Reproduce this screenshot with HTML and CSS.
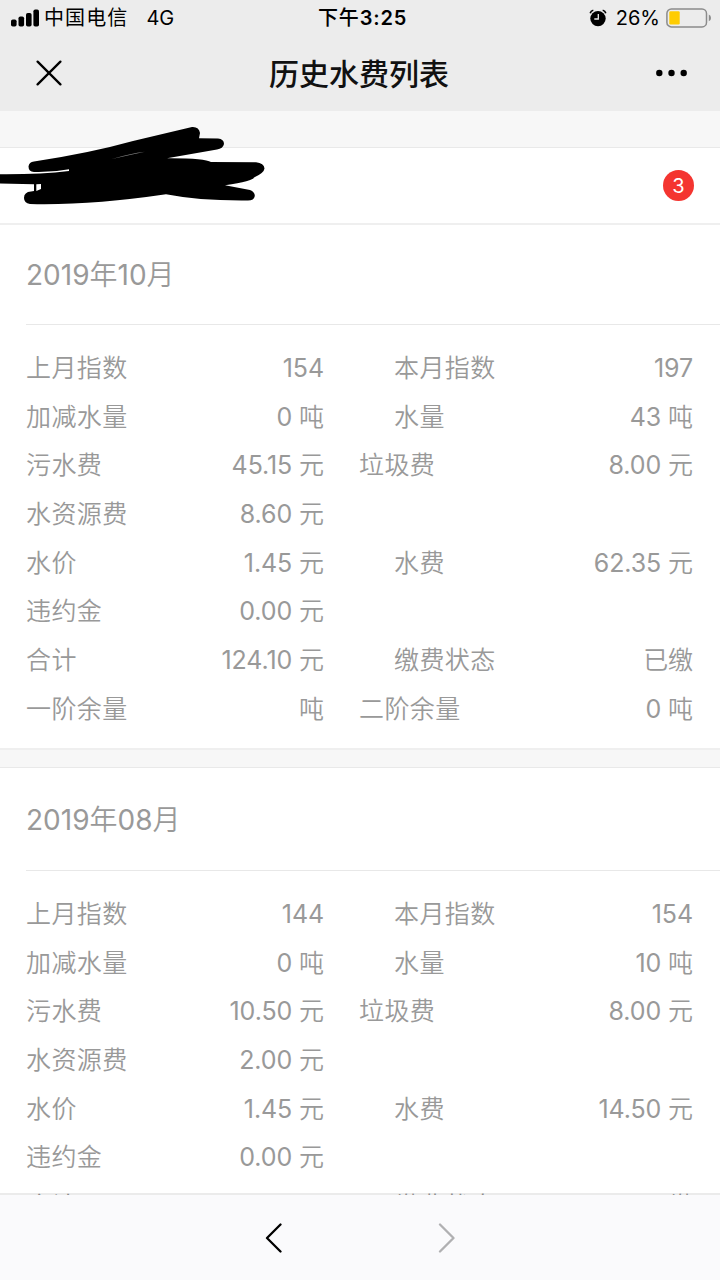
FILE: index.html
```html
<!DOCTYPE html>
<html lang="zh-CN">
<head>
    <meta charset="UTF-8">
    <meta name="viewport" content="width=device-width, initial-scale=1.0">
    <title>历史水费列表</title>
    <link rel="stylesheet" href="styles.css">
</head>
<body>

    <!-- Status bar and title -->
    <header class="header">
        <div class="status-bar">
            <div class="status-left">
                <svg class="signal" width="28" height="18" viewBox="0 0 28 18">
                    <rect x="0" y="10.5" width="5.6" height="7" rx="1.8"/>
                    <rect x="7.5" y="7.5" width="5.6" height="10" rx="1.8"/>
                    <rect x="15" y="4" width="5.6" height="13.5" rx="1.8"/>
                    <rect x="22.4" y="0.5" width="5.6" height="17" rx="1.8"/>
                </svg>
                <span class="carrier">中国电信</span>
                <span class="network">4G</span>
            </div>
            <div class="status-time">下午<span class="clock">3:25</span></div>
            <div class="status-right">
                <svg class="alarm" width="18" height="18" viewBox="0 0 18 18">
                    <circle cx="9" cy="9.6" r="7.7"/>
                    <path d="M1.2 4.2 Q1.8 1.7 4.3 1.2 M16.8 4.2 Q16.2 1.7 13.7 1.2" fill="none" stroke="#000" stroke-width="1.6"/>
                    <path d="M9.3 5 V10 H5.3" fill="none" stroke="#ececec" stroke-width="1.3"/>
                </svg>
                <span class="percent">26%</span>
                <svg class="battery" width="46" height="20" viewBox="0 0 46 20">
                    <rect x="0.9" y="0.9" width="39.6" height="18" rx="4.5" fill="none" stroke="#8b8b8b" stroke-width="1.5"/>
                    <rect x="3.3" y="3.3" width="10.4" height="13.2" rx="1.2" fill="#fc0"/>
                    <path d="M42.8 6.5 Q45 7.3 45 9.9 Q45 12.5 42.8 13.3 Z" fill="#8b8b8b"/>
                </svg>
            </div>
        </div>
        <div class="nav-bar">
            <svg class="close" width="26" height="26" viewBox="0 0 26 26">
                <path d="M1.6 1.6 L24.4 24.4 M24.4 1.6 L1.6 24.4" fill="none" stroke="#000" stroke-width="2.3" stroke-linecap="round"/>
            </svg>
            <h1>历史水费列表</h1>
            <svg class="more" width="31" height="8" viewBox="0 0 31 8">
                <circle cx="3.3" cy="4" r="3.2"/>
                <circle cx="15.5" cy="4" r="3.2"/>
                <circle cx="27.7" cy="4" r="3.2"/>
            </svg>
        </div>
    </header>

    <main class="content">
        <!-- Account row -->
        <section class="account">
            <svg class="scribble" width="270" height="90" viewBox="0 120 270 90">
                <path d="M34 161.500 Q90 153 133 141 L192 127 Q199 126.500 200 133 L199 138.300 L218 138.500 Q224 139 224 144 Q223 148.500 217 149.500 L167 158.200 Q205 158 211 162 L256 162.300 Q264 163 264.500 168.500 Q264 173 254 177.500 Q253 181 225 185.200 L250 190 Q255 192 254.800 196 Q254 200.500 248 200.500 Q200 201 166 194.300 Q90 205.500 30 204 Q24 203 24 198 Q24 192 31 191.500 L34 191 V184.200 L0 183.500 V174.200 Q40 174.500 69 171 L69 169.200 Q52 172.500 34 172 Q28.500 171.500 28.500 166.500 Q29 162 34 161.500 Z"/>
                <path d="M36.300 184.200 L41 184 L41 189 L36.300 191 Z" fill="#fff"/>
                <path d="M112 159 Q130 153.500 145 151.800 Q130 155 112 159 Z" fill="#888"/>
            </svg>
            <span class="badge">3</span>
        </section>

        <!-- October bill -->
        <section class="bill">
            <h2>2019年10月</h2>
            <div class="bill-body">
                <div class="row">
                    <div class="item"><span>上月指数</span><span class="value">154</span></div>
                    <div class="item indent"><span>本月指数</span><span class="value">197</span></div>
                </div>
                <div class="row">
                    <div class="item"><span>加减水量</span><span class="value">0 吨</span></div>
                    <div class="item indent"><span>水量</span><span class="value">43 吨</span></div>
                </div>
                <div class="row">
                    <div class="item"><span>污水费</span><span class="value">45.15 元</span></div>
                    <div class="item"><span>垃圾费</span><span class="value">8.00 元</span></div>
                </div>
                <div class="row">
                    <div class="item"><span>水资源费</span><span class="value">8.60 元</span></div>
                </div>
                <div class="row">
                    <div class="item"><span>水价</span><span class="value">1.45 元</span></div>
                    <div class="item indent"><span>水费</span><span class="value">62.35 元</span></div>
                </div>
                <div class="row">
                    <div class="item"><span>违约金</span><span class="value">0.00 元</span></div>
                </div>
                <div class="row">
                    <div class="item"><span>合计</span><span class="value">124.10 元</span></div>
                    <div class="item indent"><span>缴费状态</span><span class="value">已缴</span></div>
                </div>
                <div class="row">
                    <div class="item"><span>一阶余量</span><span class="value">吨</span></div>
                    <div class="item"><span>二阶余量</span><span class="value">0 吨</span></div>
                </div>
            </div>
        </section>

        <!-- August bill -->
        <section class="bill">
            <h2>2019年08月</h2>
            <div class="bill-body">
                <div class="row">
                    <div class="item"><span>上月指数</span><span class="value">144</span></div>
                    <div class="item indent"><span>本月指数</span><span class="value">154</span></div>
                </div>
                <div class="row">
                    <div class="item"><span>加减水量</span><span class="value">0 吨</span></div>
                    <div class="item indent"><span>水量</span><span class="value">10 吨</span></div>
                </div>
                <div class="row">
                    <div class="item"><span>污水费</span><span class="value">10.50 元</span></div>
                    <div class="item"><span>垃圾费</span><span class="value">8.00 元</span></div>
                </div>
                <div class="row">
                    <div class="item"><span>水资源费</span><span class="value">2.00 元</span></div>
                </div>
                <div class="row">
                    <div class="item"><span>水价</span><span class="value">1.45 元</span></div>
                    <div class="item indent"><span>水费</span><span class="value">14.50 元</span></div>
                </div>
                <div class="row">
                    <div class="item"><span>违约金</span><span class="value">0.00 元</span></div>
                </div>
                <div class="row">
                    <div class="item"><span>合计</span></div>
                    <div class="item indent"><span>缴费状态</span><span class="value">已缴</span></div>
                </div>
            </div>
        </section>
    </main>

    <!-- Browser back / forward -->
    <footer class="toolbar">
        <svg width="18" height="30" viewBox="0 0 18 30">
            <path d="M15.500 1.500 L2 15 L15.500 28.500" fill="none" stroke="#000" stroke-width="2.3" stroke-linecap="round" stroke-linejoin="round"/>
        </svg>
        <svg width="18" height="30" viewBox="0 0 18 30">
            <path d="M2 1.500 L15.500 15 L2 28.500" fill="none" stroke="#b0b0b2" stroke-width="2.3" stroke-linecap="round" stroke-linejoin="round"/>
        </svg>
    </footer>

</body>
</html>
```
FILE: styles.css
```css
/* General */
* {
    box-sizing: border-box;
}

body {
    font-family: Inter, "Noto Sans CJK SC", sans-serif;
    margin: 0;
    height: 1280px;
    display: flex;
    flex-direction: column;
    background-color: #f7f7f7;
    color: #000;
    overflow: hidden;
}

svg {
    display: block;
    flex: none;
}

/* Header */
.header {
    height: 111px;
    flex: none;
    background-color: #ececec;
}

.status-bar {
    height: 36px;
    display: grid;
    grid-template-columns: 1fr auto 1fr;
    align-items: center;
    padding: 0 8px 0 11px;
    font-size: 20px;
    line-height: 36px;
}

.status-left,
.status-right {
    display: flex;
    align-items: center;
}

.status-right {
    justify-content: flex-end;
}

.carrier {
    margin-left: 5px;
    letter-spacing: 1.1px;
}

.network {
    margin-left: 18px;
}

.status-time {
    font-weight: 500;
    padding-left: 2px;
    letter-spacing: 0.9px;
}

.clock {
    font-weight: 600;
    letter-spacing: 0.8px;
}

.alarm {
    margin-right: 9px;
}

.percent {
    margin-right: 6px;
}

.nav-bar {
    height: 75px;
    display: flex;
    align-items: center;
    justify-content: space-between;
    padding: 0 33px 2px 36px;
}

.nav-bar h1 {
    margin: 0;
    padding-bottom: 1px;
    font-size: 30px;
    font-weight: 500;
    color: #111;
}

/* Account row */
.content {
    flex: 1;
    min-height: 0;
    overflow: hidden;
}

.account {
    position: relative;
    height: 78px;
    margin-top: 36px;
    padding-right: 26px;
    display: flex;
    align-items: center;
    justify-content: flex-end;
    background-color: #fff;
    border-top: 1px solid #e9e9e9;
    border-bottom: 2px solid #efefef;
}

.scribble {
    position: absolute;
    left: 0;
    top: -28px;
}

.badge {
    width: 31px;
    height: 31px;
    border-radius: 50%;
    background-color: #f43530;
    color: #fff;
    font-size: 20px;
    line-height: 32px;
    text-align: center;
}

/* Bills */
.bill {
    height: 525px;
    margin-bottom: 17px;
    background-color: #fff;
    border-bottom: 2px solid #efefef;
    color: #999;
    font-family: Inter, "Noto Sans CJK SC DemiLight", "Noto Sans CJK SC", sans-serif;
}

.bill + .bill {
    border-top: 1px solid #e9e9e9;
}

.bill h2 {
    height: 100px;
    margin: 0 0 0 26px;
    border-bottom: 1px solid #e8e8e8;
    font-size: 28px;
    font-weight: 400;
    line-height: 100px;
}

.bill + .bill h2 {
    height: 103px;
    line-height: 104px;
}

.bill-body {
    padding: 19px 27px 0 26px;
    font-size: 25px;
    font-weight: 400;
    letter-spacing: 0.4px;
}

.row {
    height: 48.7px;
    display: grid;
    grid-template-columns: 298px 334px;
    column-gap: 35px;
    line-height: 48.7px;
}

.item {
    display: flex;
    justify-content: space-between;
}

.indent {
    padding-left: 35px;
}

.value {
    letter-spacing: -0.1px;
}

/* Bottom toolbar, its translucent border lies over the list */
.toolbar {
    position: relative;
    height: 87px;
    flex: none;
    margin-top: -2px;
    display: flex;
    align-items: center;
    justify-content: center;
    gap: 155px;
    background-color: #fafafc;
    background-clip: padding-box;
    border-top: 2px solid rgba(0, 0, 0, 0.08);
}
```
